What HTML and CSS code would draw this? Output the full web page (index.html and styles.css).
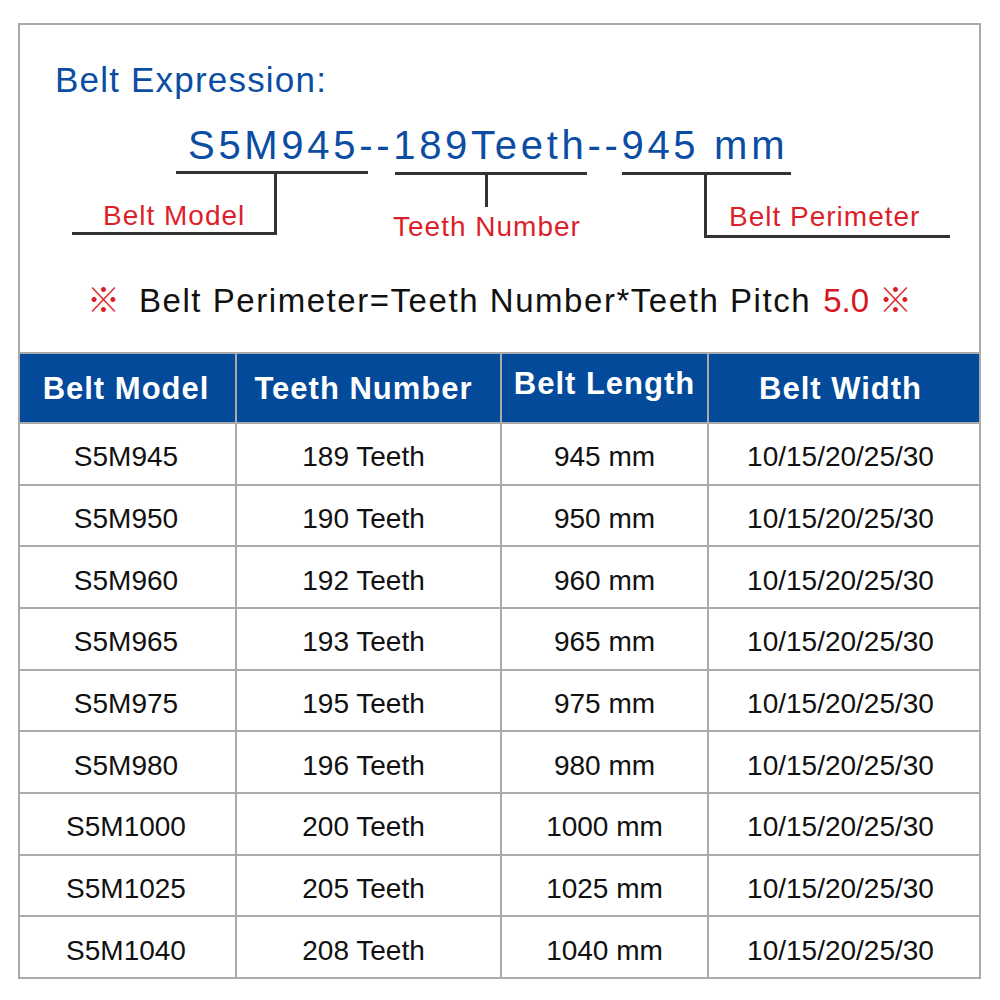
FILE: index.html
```html
<!DOCTYPE html>
<html lang="en">
<head>
<meta charset="utf-8">
<title>S5M Belt Specification</title>
<link rel="stylesheet" href="styles.css">
</head>
<body>
<div class="box">
  <section class="top">
    <h1 class="title">Belt Expression:</h1>
    <div class="expr">S5M945--189Teeth--945 mm</div>
    <div class="diagram">
      <span class="ln ln-top1"></span>
      <span class="ln ln-stem1"></span>
      <span class="ln ln-base1"></span>
      <span class="lbl lbl1">Belt Model</span>
      <span class="ln ln-top2"></span>
      <span class="ln ln-stem2"></span>
      <span class="lbl lbl2">Teeth Number</span>
      <span class="ln ln-top3"></span>
      <span class="ln ln-stem3"></span>
      <span class="ln ln-base3"></span>
      <span class="lbl lbl3">Belt Perimeter</span>
    </div>
    <p class="note"><span class="mark">※</span><span class="formula">Belt Perimeter=Teeth Number*Teeth Pitch</span><span class="pitch">5.0</span><span class="mark mark-end">※</span></p>
  </section>
  <div class="grid">
    <div class="th">Belt Model</div>
    <div class="th">Teeth Number</div>
    <div class="th th-raised">Belt Length</div>
    <div class="th">Belt Width</div>

    <div class="td">S5M945</div><div class="td">189 Teeth</div><div class="td">945 mm</div><div class="td">10/15/20/25/30</div>
    <div class="td">S5M950</div><div class="td">190 Teeth</div><div class="td">950 mm</div><div class="td">10/15/20/25/30</div>
    <div class="td">S5M960</div><div class="td">192 Teeth</div><div class="td">960 mm</div><div class="td">10/15/20/25/30</div>
    <div class="td">S5M965</div><div class="td">193 Teeth</div><div class="td">965 mm</div><div class="td">10/15/20/25/30</div>
    <div class="td">S5M975</div><div class="td">195 Teeth</div><div class="td">975 mm</div><div class="td">10/15/20/25/30</div>
    <div class="td">S5M980</div><div class="td">196 Teeth</div><div class="td">980 mm</div><div class="td">10/15/20/25/30</div>
    <div class="td">S5M1000</div><div class="td">200 Teeth</div><div class="td">1000 mm</div><div class="td">10/15/20/25/30</div>
    <div class="td">S5M1025</div><div class="td">205 Teeth</div><div class="td">1025 mm</div><div class="td">10/15/20/25/30</div>
    <div class="td">S5M1040</div><div class="td">208 Teeth</div><div class="td">1040 mm</div><div class="td">10/15/20/25/30</div>
  </div>
</div>
</body>
</html>
```

FILE: styles.css
```css
html, body {
  margin: 0;
  padding: 0;
  background: #ffffff;
}

body {
  font-family: "Liberation Sans", Arial, sans-serif;
  color: #111111;
}

.box {
  margin: 23px 0 0 18px;
  width: 959px;
  border: 2px solid #aaaaaa;
}

.top {
  height: 327px;
  box-sizing: border-box;
  padding-top: 37px;
}

.title {
  margin: 0 0 0 35px;
  font-size: 35px;
  line-height: 35px;
  font-weight: normal;
  letter-spacing: 1.2px;
  color: #0b4da2;
}

.expr {
  margin-top: 28px;
  padding-left: 168px;
  font-size: 40px;
  line-height: 40px;
  letter-spacing: 3.7px;
  color: #0b4da2;
  white-space: nowrap;
}

.diagram {
  position: relative;
  height: 75px;
}

.ln {
  position: absolute;
  background: #333333;
}

.ln-top1 { left: 156px; top: 6px; width: 192px; height: 3px; }
.ln-stem1 { left: 254px; top: 6px; width: 3px; height: 64px; }
.ln-base1 { left: 52px; top: 67px; width: 205px; height: 3px; }
.ln-top2 { left: 375px; top: 7px; width: 192px; height: 3px; }
.ln-stem2 { left: 465px; top: 7px; width: 3px; height: 35px; }
.ln-top3 { left: 602px; top: 7px; width: 169px; height: 3px; }
.ln-stem3 { left: 684px; top: 7px; width: 3px; height: 66px; }
.ln-base3 { left: 684px; top: 70px; width: 246px; height: 3px; }

.lbl {
  position: absolute;
  font-size: 28px;
  line-height: 28px;
  letter-spacing: 1px;
  color: #dc1f2b;
  white-space: nowrap;
}

.lbl1 { left: 83px; top: 37px; }
.lbl2 { left: 373px; top: 48px; }
.lbl3 { left: 709px; top: 38px; }

.note {
  margin: 42px 0 0 0;
  display: flex;
  justify-content: center;
  align-items: baseline;
  font-size: 33px;
  line-height: 33px;
  white-space: nowrap;
}

.mark {
  font-family: "Noto Sans CJK SC", "DejaVu Sans", sans-serif;
  color: #dc1f2b;
  font-size: 33px;
  margin-right: 19px;
}

.mark-end {
  margin-right: 0;
  margin-left: 10px;
}

.formula {
  letter-spacing: 1.55px;
  color: #111111;
}

.pitch {
  margin-left: 12px;
  color: #d7141f;
}

.grid {
  display: grid;
  grid-template-columns: 215px 263px 205px 270px;
  grid-template-rows: 68px repeat(9, 59.67px);
  gap: 2px;
  background: #aaaaaa;
  border-top: 2px solid #aaaaaa;
}

.th {
  background: #034a9a;
  color: #ffffff;
  font-weight: bold;
  font-size: 31px;
  line-height: 31px;
  letter-spacing: 1px;
  display: flex;
  align-items: center;
  justify-content: center;
  white-space: nowrap;
  box-sizing: border-box;
}

.th-raised {
  padding-bottom: 10px;
}

.td {
  background: #ffffff;
  font-size: 28px;
  line-height: 28px;
  display: flex;
  align-items: center;
  justify-content: center;
  padding-top: 7px;
  box-sizing: border-box;
  white-space: nowrap;
}

.grid > :nth-child(4n+1) {
  padding-right: 3px;
}

.grid > :nth-child(4n+2) {
  padding-right: 10px;
}

.grid > :nth-child(4n) {
  padding-right: 7px;
}
```
